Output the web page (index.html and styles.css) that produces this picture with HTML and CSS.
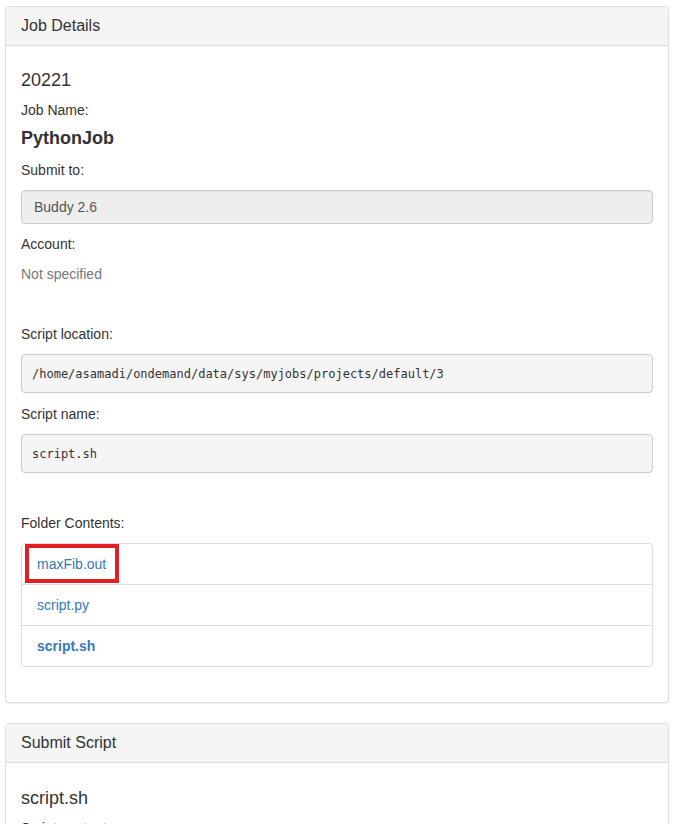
FILE: index.html
```html
<!DOCTYPE html>
<html>
<head>
    <title>Job Details</title>
    <link rel="stylesheet" href="styles.css">
</head>
<body>
    <div class="page">
        <div class="panel">
            <div class="panel-heading">Job Details</div>
            <div class="panel-body">
                <h4 class="job-id">20221</h4>

                <label>Job Name:</label>
                <h4 class="job-name">PythonJob</h4>

                <label>Submit to:</label>
                <div class="field-disabled">Buddy 2.6</div>

                <label>Account:</label>
                <p class="muted">Not specified</p>

                <label class="spaced">Script location:</label>
                <pre>/home/asamadi/ondemand/data/sys/myjobs/projects/default/3</pre>

                <label>Script name:</label>
                <pre>script.sh</pre>

                <label class="spaced folder-label">Folder Contents:</label>
                <div class="file-list">
                    <div class="file-item">
                        <a href="#">maxFib.out</a>
                        <span class="highlight"></span>
                    </div>
                    <div class="file-item"><a href="#">script.py</a></div>
                    <div class="file-item"><a href="#" class="current">script.sh</a></div>
                </div>
            </div>
        </div>

        <div class="panel">
            <div class="panel-heading">Submit Script</div>
            <div class="panel-body">
                <h4 class="script-title">script.sh</h4>
                <label>Script contents:</label>
            </div>
        </div>
    </div>
</body>
</html>
```

FILE: styles.css
```css
body {
    margin: 0;
    font-family: "Liberation Sans", Arial, sans-serif;
    font-size: 14px;
    line-height: 20px;
    color: #333;
    background-color: #fff;
}

.page {
    padding: 6px 8px 0 5px;
}

.panel {
    border: 1px solid #ddd;
    border-radius: 4px;
    background-color: #fff;
    box-shadow: 0 1px 1px rgba(0, 0, 0, 0.05);
    margin-bottom: 20px;
}

.panel-heading {
    background-color: #f5f5f5;
    border-bottom: 1px solid #ddd;
    border-radius: 3px 3px 0 0;
    padding: 10px 15px;
    font-size: 16px;
    line-height: 18px;
}

.panel-body {
    display: flex;
    flex-direction: column;
    padding: 15px;
}

h4 {
    font-size: 18px;
    line-height: 20px;
    font-weight: normal;
    margin: 0;
}

.job-id {
    margin-top: 9px;
    margin-bottom: 10px;
}

.job-name {
    font-weight: bold;
    margin-top: -2px;
    margin-bottom: 12px;
}

label {
    display: block;
    margin-bottom: 10px;
}

label.spaced {
    margin-top: 30px;
}

label.folder-label {
    margin-top: 29px;
}

.field-disabled {
    height: 20px;
    padding: 6px 12px;
    border: 1px solid #ccc;
    border-radius: 4px;
    background-color: #eee;
    color: #555;
    box-shadow: inset 0 1px 1px rgba(0, 0, 0, 0.075);
    margin-bottom: 10px;
}

.muted {
    color: #777;
    margin: 0 0 10px;
}

pre {
    margin: 0 0 11px;
    padding: 9px 10px 8px;
    font-family: "DejaVu Sans Mono", "Liberation Mono", monospace;
    font-size: 12px;
    line-height: 20px;
    color: #333;
    background-color: #f5f5f5;
    border: 1px solid #ccc;
    border-radius: 4px;
}

.file-list {
    border: 1px solid #ddd;
    border-radius: 4px;
    margin-bottom: 20px;
}

.file-item {
    position: relative;
    padding: 10px 15px;
}

.file-item + .file-item {
    border-top: 1px solid #ddd;
}

.file-item a {
    color: #337ab7;
    text-decoration: none;
}

.file-item a.current {
    font-weight: bold;
}

.highlight {
    position: absolute;
    left: 3px;
    top: 0;
    width: 86px;
    height: 31px;
    border: 4px solid #e31e24;
}

.script-title {
    margin-top: 10px;
    margin-bottom: 10px;
}
```
